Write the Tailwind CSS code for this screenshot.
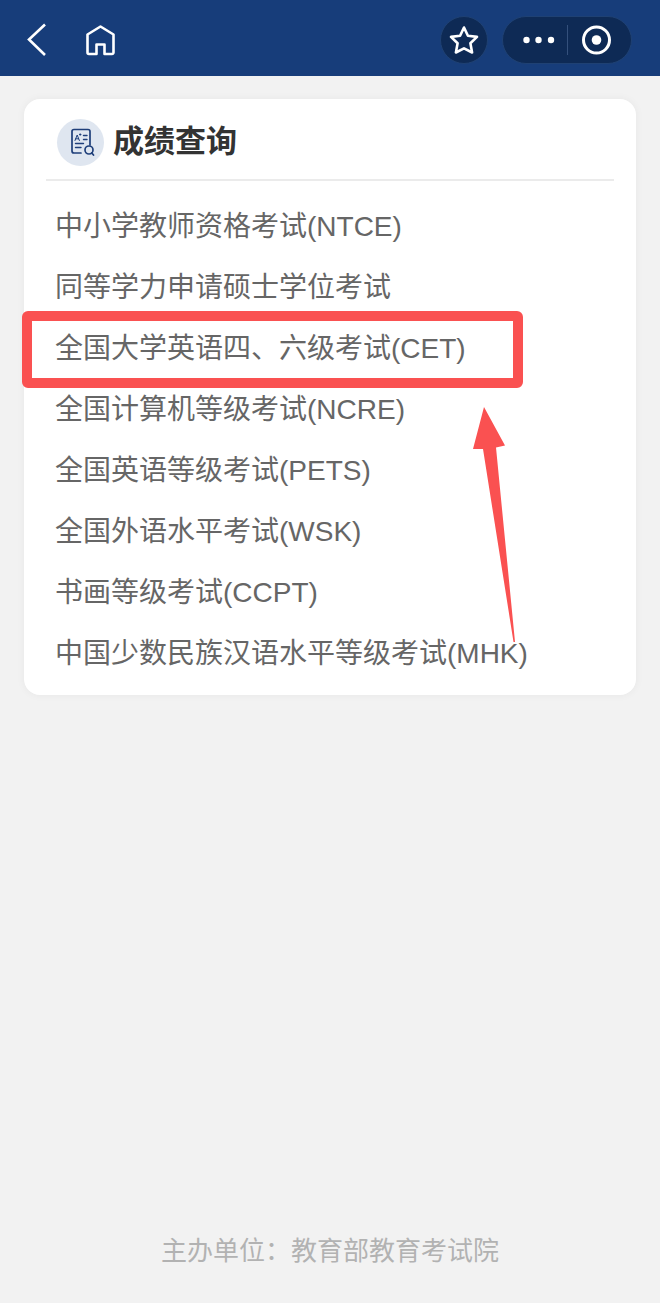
<!DOCTYPE html>
<html lang="zh-CN">
<head>
    <meta charset="UTF-8">
    <meta name="viewport" content="width=device-width, initial-scale=1.0">
    <title>成绩查询</title>
    <script src="https://cdn.jsdelivr.net/npm/@tailwindcss/browser@4"></script>
</head>
<body class="min-h-screen flex flex-col bg-[#f2f2f2] font-['Liberation_Sans','Noto_Sans_CJK_SC',sans-serif]">

    <!-- 顶部导航栏 -->
    <header class="flex items-center justify-between h-[76px] pt-1 pl-6 pr-7 bg-[#173d7a] text-white">
        <nav class="flex items-center gap-8">
            <button type="button" aria-label="返回">
                <svg class="w-7 h-9" viewBox="0 0 28 36" fill="none" stroke="currentColor" stroke-width="2.6">
                    <path d="M21 2.500 5 17.500 21 33" />
                </svg>
            </button>
            <a href="#home" aria-label="首页">
                <svg class="w-8 h-9" viewBox="0 0 32 36" fill="none" stroke="currentColor" stroke-width="2.6" stroke-linejoin="round">
                    <path d="M16.500 4.500 29.500 12.500V30.500a1.500 1.500 0 0 1-1.500 1.500H20.500V22.500H12.500V32H5a1.500 1.500 0 0 1-1.500-1.500V12.500Z" />
                </svg>
            </a>
        </nav>
        <div class="flex items-center gap-[14px]">
            <button type="button" aria-label="收藏" class="flex items-center justify-center w-12 h-12 rounded-full bg-[#0e2a55] border border-[#1f4173]">
                <svg class="w-8 h-8" viewBox="0 0 32 32" fill="none" stroke="currentColor" stroke-width="2.6" stroke-linejoin="round">
                    <path d="M16 3.500 19.900 11.700 29 12.900 22.400 19.200 24.100 28.500 16 24.300 7.900 28.500 9.600 19.200 3 12.900 12.100 11.700Z" />
                </svg>
            </button>
            <div class="flex items-center w-[130px] h-12 rounded-full bg-[#0e2a55] border border-[#1f4173]">
                <button type="button" aria-label="更多" class="flex flex-1 justify-end pr-3">
                    <svg class="w-8 h-8" viewBox="0 0 32 32" fill="currentColor">
                        <circle cx="3.500" cy="16" r="3.200" />
                        <circle cx="15.500" cy="16" r="3.200" />
                        <circle cx="28" cy="16" r="3.200" />
                    </svg>
                </button>
                <span class="w-px h-[30px] bg-[#34507c]"></span>
                <button type="button" aria-label="关闭" class="flex flex-1 pl-3">
                    <svg class="w-8 h-8" viewBox="0 0 32 32" fill="none" stroke="currentColor" stroke-width="3">
                        <circle cx="16.500" cy="16" r="13" />
                        <circle cx="16.500" cy="16" r="4.800" fill="currentColor" stroke="none" />
                    </svg>
                </button>
            </div>
        </div>
    </header>

    <!-- 考试列表 -->
    <main class="flex-1 px-6 pt-[23px]">
        <section class="relative rounded-2xl bg-white pb-[11px] shadow-[0_0_8px_rgba(0,0,0,0.05)]">
            <div class="flex items-center gap-[9px] h-[82px] mx-[22px] pl-[11px] pt-[6px] border-b-2 border-[#ebebeb]">
                <span class="flex items-center justify-center w-[47px] h-[47px] rounded-full bg-[#dfe6f0]">
                    <svg class="w-7 h-8" viewBox="0 0 28 32" fill="none" stroke="#1f3f7a" stroke-width="1.700" stroke-linecap="round" stroke-linejoin="round">
                        <path d="M14 27H7A2 2 0 0 1 5 25V5.500A2 2 0 0 1 7 3.500H21A2 2 0 0 1 23 5.500V19" />
                        <path d="M8 14.500 10.200 9 12.400 14.500M8.800 12.800H11.600M12.500 8.500H14M13.200 7.800V9.300" stroke-width="1" />
                        <path d="M16.500 9.500H20M16.500 13.500H20M8.500 17.500H16.500M8.500 21.500H14" stroke-width="1.400" />
                        <circle cx="22" cy="24" r="4" />
                        <path d="M24.800 27 26.500 29" stroke-width="1.800" />
                    </svg>
                </span>
                <h1 class="text-[31px] font-bold text-[#333]">成绩查询</h1>
            </div>
            <ul class="mt-[15px] px-[31px] text-[28px] leading-[61px] text-[#666]">
                <li><a href="#ntce">中小学教师资格考试(NTCE)</a></li>
                <li><a href="#degree">同等学力申请硕士学位考试</a></li>
                <li class="relative">
                    <a href="#cet">全国大学英语四、六级考试(CET)</a>
                    <!-- 红框标注 -->
                    <span class="absolute -left-[33px] -top-[7px] w-[501px] h-[77px] rounded-md border-[10px] border-[#fa5151] pointer-events-none"></span>
                </li>
                <li><a href="#ncre">全国计算机等级考试(NCRE)</a></li>
                <li><a href="#pets">全国英语等级考试(PETS)</a></li>
                <li><a href="#wsk">全国外语水平考试(WSK)</a></li>
                <li><a href="#ccpt">书画等级考试(CCPT)</a></li>
                <li><a href="#mhk">中国少数民族汉语水平等级考试(MHK)</a></li>
            </ul>
            <!-- 箭头标注 -->
            <svg class="absolute left-[448px] top-[307px] w-12 h-60 pointer-events-none" viewBox="0 0 48 240" fill="#fa5151">
                <path d="M12 1 33 39.500 24 41.500 43 236H41.500L11 43 1 43Z" />
            </svg>
        </section>
    </main>

    <footer class="pb-8 text-center text-[26px] leading-10 text-[#b2b2b2]">主办单位：教育部教育考试院</footer>

</body>
</html>
